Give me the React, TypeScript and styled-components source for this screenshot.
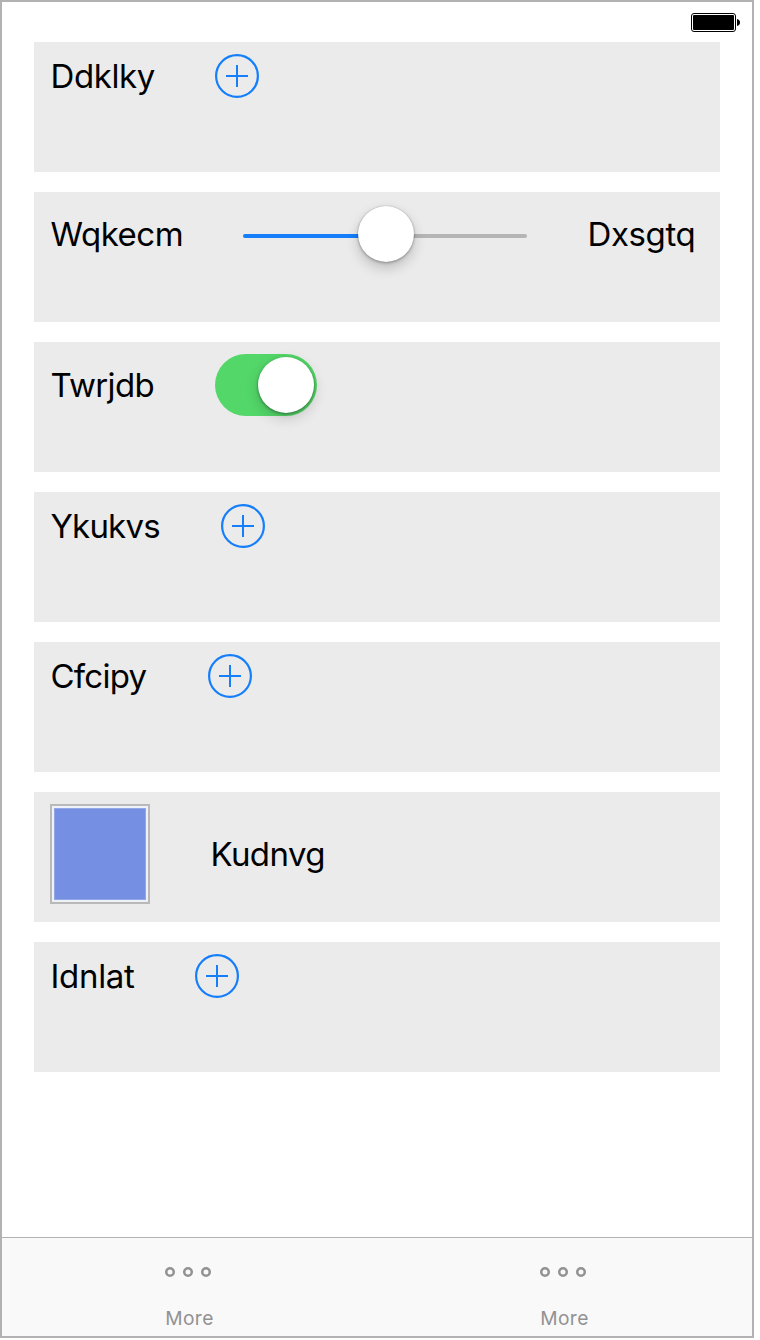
import React from "react";
import styled, { createGlobalStyle } from "styled-components";

const GlobalStyle = createGlobalStyle`
  * { box-sizing: border-box; }
  body { margin: 0; background: #fff; font-family: Inter, "Liberation Sans", sans-serif; }
`;

const Screen = styled.div`
  width: 754px;
  height: 1338px;
  border: 2px solid #b2b2b2;
  background: #fff;
  display: flex;
  flex-direction: column;
`;

const StatusBar = styled.header`
  height: 40px;
  padding: 11px 12px 0 0;
  display: flex;
  justify-content: flex-end;
`;

const CardList = styled.main`
  flex: 1;
  padding: 0 32px;
  display: flex;
  flex-direction: column;
  gap: 20px;
`;

const Card = styled.section`
  height: 130px;
  padding: 12px 16px;
  background: #ebebeb;
  display: flex;
  align-items: flex-start;
`;

const Row = styled.div<{ $height?: number }>`
  height: ${(p) => p.$height ?? 44}px;
  display: flex;
  align-items: center;
  gap: 60px;
`;

const Label = styled.span<{ $width: number; $tracking?: number }>`
  width: ${(p) => p.$width}px;
  flex: none;
  padding-left: 0.5px;
  font-size: 33px;
  line-height: 44px;
  letter-spacing: ${(p) => p.$tracking ?? -0.5}px;
  white-space: nowrap;
  color: #000;
`;

const AddButton = styled.button`
  width: 44px;
  height: 44px;
  padding: 0;
  border: 0;
  background: none;
  display: block;
  svg { display: block; }
`;

const Thumb = styled.div`
  width: 56px;
  height: 56px;
  flex: none;
  border-radius: 50%;
  background: #fff;
`;

const Slider = styled.div`
  width: 284px;
  height: 56px;
  display: flex;
  align-items: center;
`;

const Track = styled.div<{ $active?: boolean }>`
  flex: ${(p) => (p.$active ? "0 0 115px" : "1")};
  height: 4px;
  margin-top: 4px;
  border-radius: ${(p) => (p.$active ? "2px 0 0 2px" : "0 2px 2px 0")};
  background: ${(p) => (p.$active ? "#157efb" : "#b5b5b5")};
  box-shadow: ${(p) => (p.$active ? "2px 0 #157efb" : "-2px 0 #b5b5b5")};
`;

const SliderThumb = styled(Thumb)`
  z-index: 1;
  box-shadow: 0 0 1px rgba(0, 0, 0, 0.25), 0 1px 3px rgba(0, 0, 0, 0.3), 0 6px 13px rgba(0, 0, 0, 0.2);
`;

const Switch = styled.div`
  width: 102px;
  height: 62px;
  padding: 3px;
  border-radius: 31px;
  background: #53d769;
  display: flex;
  justify-content: flex-end;
`;

const SwitchThumb = styled(Thumb)`
  box-shadow: 0 1px 3px rgba(0, 0, 0, 0.4), 0 5px 14px rgba(0, 0, 0, 0.18);
`;

const Swatch = styled.div`
  width: 100px;
  height: 100px;
  padding: 2px;
  border: 2px solid #b9b9b9;
  background: #eff1f8;
`;

const SwatchFill = styled.div`
  height: 100%;
  border: 1px solid #93a6e6;
  background: #758fe2;
`;

const TabBar = styled.nav`
  height: 99px;
  border-top: 1px solid #b2b2b2;
  background: #f9f9f9;
  display: flex;
`;

const Tab = styled.div`
  flex: 1;
  padding-top: 29px;
  display: flex;
  flex-direction: column;
  align-items: center;
  gap: 29px;
  color: #929292;
  svg { display: block; margin-right: 3px; }
`;

const TabLabel = styled.span`
  font-size: 19.2px;
  line-height: 24px;
  letter-spacing: 0.4px;
`;

const Add = () => (
  <AddButton aria-label="Add">
    <svg width="44" height="44" fill="none" stroke="#157efb" strokeWidth="2">
      <circle cx="22" cy="22" r="20.9" strokeWidth="2.2" />
      <path d="M11 22H33M22 11V33" />
    </svg>
  </AddButton>
);

const Battery = () => (
  <svg width="49" height="19">
    <rect x="0.5" y="0.5" width="44" height="18" rx="2.5" fill="#fff" stroke="#000" />
    <rect x="2" y="2" width="41" height="15" rx="1" />
    <path d="M46 6C48 6.3 49 7.6 49 9.5S48 12.7 46 13Z" />
  </svg>
);

const MoreTab = () => (
  <Tab>
    <svg width="46" height="10" fill="none" stroke="#929292" strokeWidth="2.5">
      <circle cx="5" cy="5" r="3.75" />
      <circle cx="23" cy="5" r="3.75" />
      <circle cx="41" cy="5" r="3.75" />
    </svg>
    <TabLabel>More</TabLabel>
  </Tab>
);

const AddCard = ({ text, width, tracking }: { text: string; width: number; tracking?: number }) => (
  <Card>
    <Row>
      <Label $width={width} $tracking={tracking}>{text}</Label>
      <Add />
    </Row>
  </Card>
);

export default function App() {
  return (
    <>
      <GlobalStyle />
      <Screen>
        <StatusBar><Battery /></StatusBar>
        <CardList>
          <AddCard text="Ddklky" width={105} tracking={-0.4} />
          <Card>
            <Row $height={60}>
              <Label $width={133} $tracking={-0.45}>Wqkecm</Label>
              <Slider>
                <Track $active />
                <SliderThumb />
                <Track />
              </Slider>
              <Label $width={108} $tracking={-0.4}>Dxsgtq</Label>
            </Row>
          </Card>
          <Card>
            <Row $height={62}>
              <Label $width={105} $tracking={-0.7}>Twrjdb</Label>
              <Switch role="switch" aria-checked="true"><SwitchThumb /></Switch>
            </Row>
          </Card>
          <AddCard text="Ykukvs" width={111} tracking={-0.8} />
          <AddCard text="Cfcipy" width={98} tracking={-0.75} />
          <Card>
            <Row $height={100}>
              <Swatch><SwatchFill /></Swatch>
              <Label $width={116} $tracking={-0.6}>Kudnvg</Label>
            </Row>
          </Card>
          <AddCard text="Idnlat" width={85} tracking={-0.3} />
        </CardList>
        <TabBar>
          <MoreTab />
          <MoreTab />
        </TabBar>
      </Screen>
    </>
  );
}
